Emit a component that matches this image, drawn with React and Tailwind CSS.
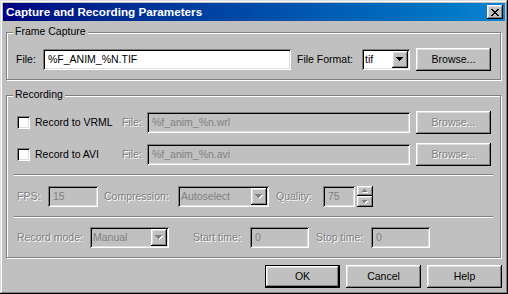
import React from 'react';

const SUNKEN = 'shadow-[inset_1px_1px_0_#808080,inset_-1px_-1px_0_#fff,inset_2px_2px_0_#000,inset_-2px_-2px_0_#dfdfdf]';
const RAISED = 'shadow-[inset_-1px_-1px_0_#000,inset_1px_1px_0_#fff,inset_-2px_-2px_0_#808080,inset_2px_2px_0_#dfdfdf]';
const DEFAULT_BTN = 'shadow-[inset_0_0_0_1px_#000,inset_-2px_-2px_0_#000,inset_2px_2px_0_#fff,inset_-3px_-3px_0_#808080,inset_3px_3px_0_#dfdfdf]';
const DIM = 'text-[#808080] [text-shadow:1px_1px_0_#fff]';

function Down({ off }) {
  const rows = [[0, 7], [1, 5], [2, 3], [3, 1]];
  return (
    <svg width="8" height="5" viewBox="0 0 8 5" shapeRendering="crispEdges">
      {off && rows.map(([i, w]) => <rect key={'s' + i} x={i + 1} y={i + 1} width={w} height="1" fill="#fff" />)}
      {rows.map(([i, w]) => <rect key={i} x={i} y={i} width={w} height="1" fill={off ? '#808080' : '#000'} />)}
    </svg>
  );
}

function Small({ up }) {
  const rows = up ? [[2, 1], [1, 3], [0, 5]] : [[0, 5], [1, 3], [2, 1]];
  return (
    <svg width="6" height="4" viewBox="0 0 6 4" shapeRendering="crispEdges">
      {rows.map(([x, w], y) => <rect key={'s' + y} x={x + 1} y={y + 1} width={w} height="1" fill="#fff" />)}
      {rows.map(([x, w], y) => <rect key={y} x={x} y={y} width={w} height="1" fill="#808080" />)}
    </svg>
  );
}

function CloseGlyph() {
  const rows = [
    [[0, 2], [6, 2]],
    [[1, 2], [5, 2]],
    [[2, 4]],
    [[3, 2]],
    [[2, 4]],
    [[1, 2], [5, 2]],
    [[0, 2], [6, 2]],
  ];
  return (
    <svg width="8" height="7" viewBox="0 0 8 7" shapeRendering="crispEdges">
      {rows.map((r, y) => r.map(([x, w]) => <rect key={y + '-' + x} x={x} y={y} width={w} height="1" fill="#000" />))}
    </svg>
  );
}

function Field({ className, value, off }) {
  return (
    <div className={`h-[21px] shrink-0 flex items-center pl-[5px] whitespace-nowrap overflow-hidden ${SUNKEN} ${off ? 'bg-[#c0c0c0] text-[#808080]' : 'bg-white text-black'} ${className}`}>
      {value}
    </div>
  );
}

function Combo({ className, value, off }) {
  return (
    <div className={`h-[21px] shrink-0 flex items-center justify-between p-[2px] ${SUNKEN} ${off ? 'bg-[#c0c0c0] text-[#808080]' : 'bg-white text-black'} ${className}`}>
      <span className="pl-[1px] whitespace-nowrap">{value}</span>
      <div className={`w-[16px] h-[17px] shrink-0 flex items-center justify-center bg-[#c0c0c0] ${RAISED}`}>
        <Down off={off} />
      </div>
    </div>
  );
}

function Btn({ children, off, def, className = '' }) {
  return (
    <div className={`w-[75px] h-[23px] shrink-0 flex items-center justify-center bg-[#c0c0c0] ${def ? DEFAULT_BTN : RAISED} ${off ? DIM : 'text-black'} ${className}`}>
      {children}
    </div>
  );
}

function Check() {
  return <div className={`w-[13px] h-[13px] shrink-0 bg-white ${SUNKEN}`} />;
}

function Separator({ className }) {
  return <div className={`ml-[7px] w-[479px] h-[2px] border-t border-b border-t-[#808080] border-b-white ${className}`} />;
}

function Group({ title, className, children }) {
  return (
    <div className={`relative ml-[3px] w-[495px] border border-[#808080] shadow-[1px_1px_0_#fff,inset_1px_1px_0_#fff] ${className}`}>
      <div className="absolute left-[6px] -top-[8px] px-[2px] bg-[#c0c0c0] leading-[13px]">{title}</div>
      {children}
    </div>
  );
}

export default function App() {
  return (
    <div className="w-[508px] h-[294px] p-[3px] bg-[#c0c0c0] text-[10.5px] text-black font-['Liberation_Sans',Arial,sans-serif] shadow-[inset_-1px_-1px_0_#000,inset_1px_1px_0_#dfdfdf,inset_-2px_-2px_0_#808080,inset_2px_2px_0_#fff] overflow-hidden">
      <div className="h-[18px] flex items-center justify-between pl-[3px] pr-[2px] bg-gradient-to-r from-[#000080] to-[#1084d0]">
        <span className="text-white font-bold text-[11.7px] leading-none">Capture and Recording Parameters</span>
        <div className={`w-[16px] h-[14px] flex items-center justify-center bg-[#c0c0c0] ${RAISED}`}>
          <CloseGlyph />
        </div>
      </div>

      <Group title="Frame Capture" className="mt-[11px] h-[48px]">
        <div className="flex items-center mt-[15px] h-[23px]">
          <span className="ml-[9px] w-[27px] shrink-0">File:</span>
          <Field className="w-[248px]" value="%F_ANIM_%N.TIF" />
          <span className="ml-[6px] w-[65px] shrink-0">File Format:</span>
          <Combo className="w-[48px]" value="tif" />
          <Btn className="ml-[6px]">Browse...</Btn>
        </div>
      </Group>

      <Group title="Recording" className="mt-[15px] h-[163px]">
        <div className="flex items-center mt-[15px] h-[23px]">
          <div className="ml-[10px]"><Check /></div>
          <span className="ml-[5px] w-[87px] shrink-0">Record to VRML</span>
          <span className={`w-[25px] shrink-0 ${DIM}`}>File:</span>
          <Field off className="w-[263px]" value="%f_anim_%n.wrl" />
          <Btn off className="ml-[6px]">Browse...</Btn>
        </div>
        <div className="flex items-center mt-[9px] h-[23px]">
          <div className="ml-[10px]"><Check /></div>
          <span className="ml-[5px] w-[87px] shrink-0">Record to AVI</span>
          <span className={`w-[25px] shrink-0 ${DIM}`}>File:</span>
          <Field off className="w-[263px]" value="%f_anim_%n.avi" />
          <Btn off className="ml-[6px]">Browse...</Btn>
        </div>

        <Separator className="mt-[8px]" />

        <div className="flex items-center mt-[10px] h-[21px]">
          <span className={`ml-[10px] w-[31px] shrink-0 ${DIM}`}>FPS:</span>
          <Field off className="w-[50px]" value="15" />
          <span className={`ml-[6px] w-[74px] shrink-0 ${DIM}`}>Compression:</span>
          <Combo off className="w-[91px]" value="Autoselect" />
          <span className={`ml-[7px] w-[47px] shrink-0 ${DIM}`}>Quality:</span>
          <Field off className="w-[32px]" value="75" />
          <div className="ml-[2px] w-[16px] h-[21px] flex flex-col shrink-0">
            <div className={`h-[10px] flex items-center justify-center ${RAISED}`}><Small up /></div>
            <div className={`h-[11px] flex items-center justify-center ${RAISED}`}><Small /></div>
          </div>
        </div>

        <Separator className="mt-[9px]" />

        <div className="flex items-center mt-[9px] h-[21px]">
          <span className={`ml-[10px] w-[73px] shrink-0 ${DIM}`}>Record mode:</span>
          <Combo off className="w-[79px]" value="Manual" />
          <span className={`ml-[24px] w-[57px] shrink-0 ${DIM}`}>Start time:</span>
          <Field off className="w-[59px]" value="0" />
          <span className={`ml-[7px] w-[55px] shrink-0 ${DIM}`}>Stop time:</span>
          <Field off className="w-[59px]" value="0" />
        </div>
      </Group>

      <div className="flex justify-end gap-[6px] mt-[7px] mr-[3px]">
        <Btn def>OK</Btn>
        <Btn>Cancel</Btn>
        <Btn>Help</Btn>
      </div>
    </div>
  );
}
